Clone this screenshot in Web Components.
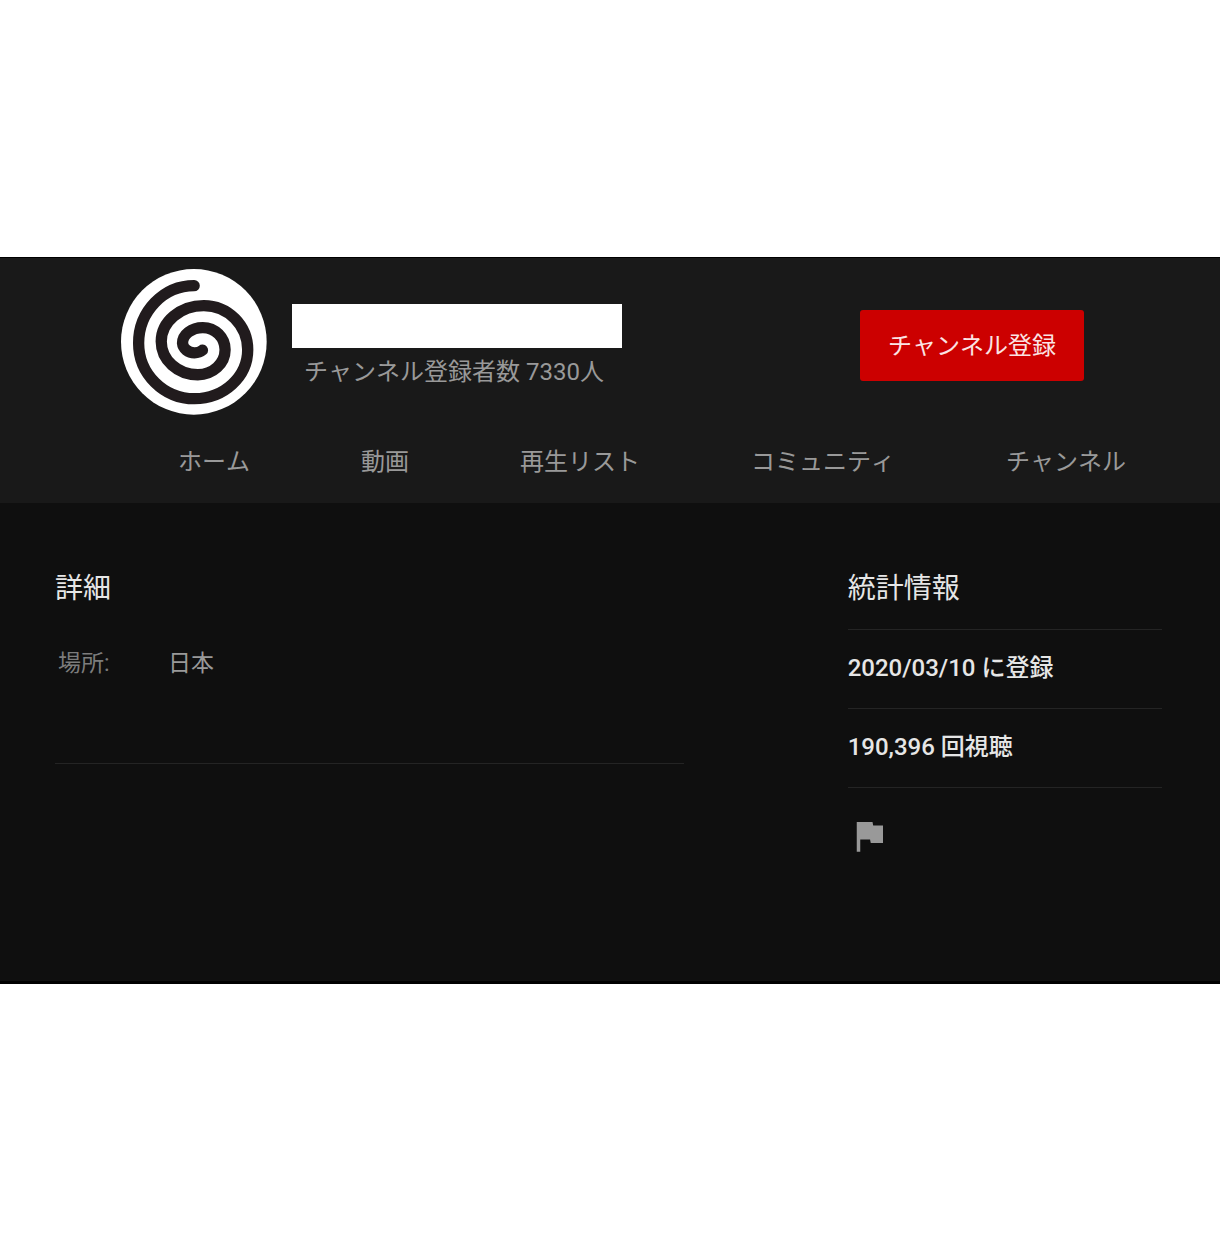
<!DOCTYPE html>
<html lang="ja">
<head>
<meta charset="UTF-8">
<meta name="viewport" content="width=device-width, initial-scale=1">
<title>チャンネル</title>
<style>
  body {
    margin: 0;
    padding: 257px 0;
    background: #fff;
    font-family: Roboto, "Noto Sans CJK JP", sans-serif;
    font-size: 24px;
    font-kerning: none;
    line-height: 36px;
    --panel: #191919;
    --page: #0f0f0f;
    --line: #242424;
    --text: #e6e6e6;
    --muted: #999;
    --dim: #7c7c7c;
    --red: #cc0000;
  }
</style>
</head>
<body>
<channel-page>
  <channel-header slot="header" subscribers="チャンネル登録者数 7330人">
    <channel-avatar slot="avatar"></channel-avatar>
    <subscribe-button slot="action">チャンネル登録</subscribe-button>
  </channel-header>
  <channel-tabs slot="header">
    <channel-tab>ホーム</channel-tab>
    <channel-tab>動画</channel-tab>
    <channel-tab>再生リスト</channel-tab>
    <channel-tab>コミュニティ</channel-tab>
    <channel-tab>チャンネル</channel-tab>
  </channel-tabs>
  <channel-details heading="詳細" label="場所:">日本</channel-details>
  <channel-stats heading="統計情報">
    <stat-row>2020/03/10 に登録</stat-row>
    <stat-row>190,396 回視聴</stat-row>
    <flag-button slot="footer"></flag-button>
  </channel-stats>
</channel-page>

<script>
class BaseElement extends HTMLElement {
  connectedCallback() {
    if (!this.shadowRoot) this.attachShadow({ mode: 'open' });
    this.shadowRoot.innerHTML = this.render();
  }
}

class ChannelPage extends BaseElement {
  render() {
    return `
      <style>
        :host {
          display: block;
          background: var(--page);
          border-top: 1px solid #000;
          border-bottom: 3px solid #000;
        }
        header {
          background: var(--panel);
        }
        main {
          display: grid;
          grid-template-columns: 2fr 1fr;
          gap: 164px;
          padding: 68px 58px 124px 55px;
        }
      </style>
      <header><slot name="header"></slot></header>
      <main><slot></slot></main>
    `;
  }
}

class ChannelHeader extends BaseElement {
  render() {
    return `
      <style>
        :host {
          display: flex;
          align-items: flex-start;
          padding: 11px 136px 0 121px;
        }
        .info {
          flex: 1;
          padding: 35px 25px 0;
        }
        .name {
          width: 330px;
          height: 44px;
          background: #fff;
        }
        .subscribers {
          padding: 6px 12px 0;
          color: var(--muted);
          white-space: nowrap;
        }
        .action {
          padding-top: 41px;
        }
      </style>
      <slot name="avatar"></slot>
      <div class="info">
        <div class="name"></div>
        <div class="subscribers">${this.getAttribute('subscribers')}</div>
      </div>
      <div class="action"><slot name="action"></slot></div>
    `;
  }
}

class ChannelAvatar extends BaseElement {
  render() {
    return `
      <style>
        :host {
          display: block;
          flex: none;
        }
        svg {
          display: block;
          width: 146px;
          height: 146px;
        }
      </style>
      <svg viewBox="34 57 439 439" aria-hidden="true">
        <circle cx="253" cy="276" r="219" fill="#fff"/>
        <path fill="none" stroke="#211b1d" stroke-width="34" stroke-linecap="round" d="
          M254 107
          A167 173 0 0 0 87 280
          A168 167 0 0 0 255 447
          A160 147 0 0 0 415 300
          A132 133 0 0 0 283 167
          A128 108 0 0 0 155 275
          A110 100 0 0 0 265 375
          A82 75 0 0 0 347 300
          A67 67 0 0 0 280 233
          A61 47 0 0 0 219 280
          A36 31 0 0 0 255 309
          Q270 309 279 301"/>
      </svg>
    `;
  }
}

class SubscribeButton extends BaseElement {
  render() {
    return `
      <style>
        :host {
          display: block;
        }
        button {
          display: block;
          height: 71px;
          padding: 0 28px;
          border: 0;
          border-radius: 3px;
          background: var(--red);
          color: #fbe4e4;
          font: inherit;
          font-kerning: inherit;
          white-space: nowrap;
          cursor: pointer;
        }
      </style>
      <button type="button"><slot></slot></button>
    `;
  }
}

class ChannelTabs extends BaseElement {
  render() {
    return `
      <style>
        :host {
          display: block;
          overflow: hidden;
        }
        nav {
          display: flex;
          gap: 111px;
          padding: 0 0 0 178px;
        }
      </style>
      <nav><slot></slot></nav>
    `;
  }
}

class ChannelTab extends BaseElement {
  render() {
    return `
      <style>
        :host {
          display: block;
          flex: none;
        }
        a {
          display: block;
          padding: 29px 0 23px;
          color: var(--muted);
          text-decoration: none;
          white-space: nowrap;
        }
      </style>
      <a href="#"><slot></slot></a>
    `;
  }
}

class ChannelDetails extends BaseElement {
  render() {
    return `
      <style>
        :host {
          display: block;
        }
        h2 {
          margin: 0;
          color: var(--text);
          font-size: 28px;
          font-weight: 400;
        }
        dl {
          display: flex;
          margin: 0;
          padding: 39px 3px 81px;
          border-bottom: 1px solid var(--line);
          font-size: 23px;
        }
        dt {
          width: 110px;
          color: var(--dim);
        }
        dd {
          margin: 0;
          color: var(--muted);
        }
      </style>
      <h2>${this.getAttribute('heading')}</h2>
      <dl>
        <dt>${this.getAttribute('label')}</dt>
        <dd><slot></slot></dd>
      </dl>
    `;
  }
}

class ChannelStats extends BaseElement {
  render() {
    return `
      <style>
        :host {
          display: block;
        }
        h2 {
          margin: 0;
          padding-bottom: 22px;
          border-bottom: 1px solid var(--line);
          color: var(--text);
          font-size: 28px;
          font-weight: 400;
        }
      </style>
      <h2>${this.getAttribute('heading')}</h2>
      <slot></slot>
      <slot name="footer"></slot>
    `;
  }
}

class StatRow extends BaseElement {
  render() {
    return `
      <style>
        :host {
          display: block;
          padding: 20px 0 22px;
          border-bottom: 1px solid var(--line);
          color: var(--text);
          font-weight: 500;
          white-space: nowrap;
        }
      </style>
      <slot></slot>
    `;
  }
}

class FlagButton extends BaseElement {
  render() {
    return `
      <style>
        :host {
          display: block;
          padding-top: 27px;
        }
        button {
          display: block;
          padding: 0;
          border: 0;
          background: none;
          color: #999;
          cursor: pointer;
        }
        svg {
          display: block;
          width: 42px;
          height: 42px;
          fill: currentColor;
        }
      </style>
      <button type="button" aria-label="報告">
        <svg viewBox="0 0 24 24"><path d="M14.4 6L14 4H5v17h2v-7h5.6l.4 2h7V6z"/></svg>
      </button>
    `;
  }
}

customElements.define('channel-page', ChannelPage);
customElements.define('channel-header', ChannelHeader);
customElements.define('channel-avatar', ChannelAvatar);
customElements.define('subscribe-button', SubscribeButton);
customElements.define('channel-tabs', ChannelTabs);
customElements.define('channel-tab', ChannelTab);
customElements.define('channel-details', ChannelDetails);
customElements.define('channel-stats', ChannelStats);
customElements.define('stat-row', StatRow);
customElements.define('flag-button', FlagButton);
</script>
</body>
</html>
